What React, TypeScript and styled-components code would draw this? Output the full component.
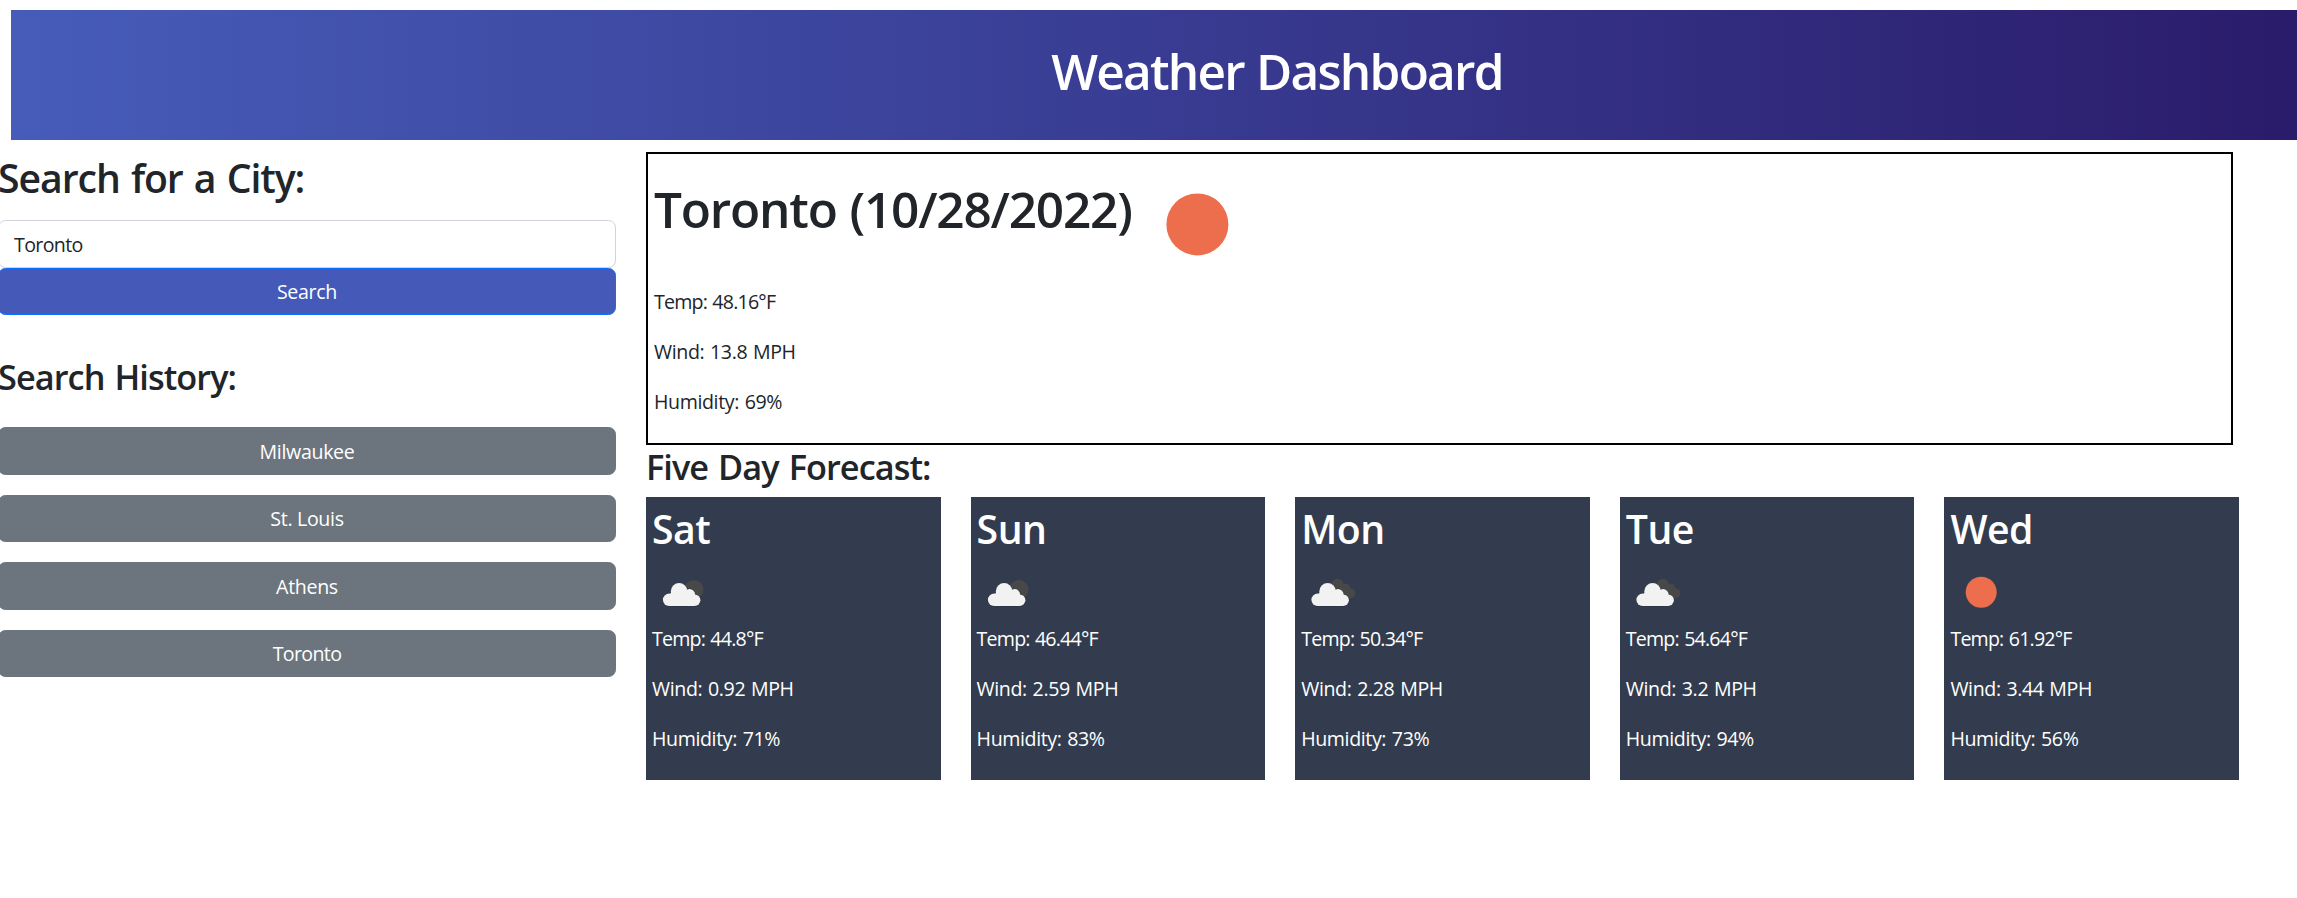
import React from 'react';
import styled, { createGlobalStyle } from 'styled-components';

const GlobalStyle = createGlobalStyle`
  *, *::before, *::after { box-sizing: border-box; }
  html { overflow: hidden; }
  body {
    margin: 0;
    background: #fff;
    color: #212529;
    font-family: 'Open Sans', 'Noto Sans', sans-serif;
    font-size: 19.6px;
    line-height: 30px;
  }
  h1, h2, h3, p { margin: 0; }
`;

const Page = styled.div`
  width: 100%;
  height: 898px;
  overflow: hidden;
`;

const Header = styled.header`
  width: 2532px;
  height: 130px;
  margin: 10px 0 0 11px;
  padding-top: 31px;
  background: linear-gradient(to right, #465cb9 0%, #2b1c6b 90%);
  color: #fff;
  text-align: center;
`;

const Title = styled.h1<{ $tracking: number }>`
  font-size: 49.5px;
  line-height: 60px;
  font-weight: 600;
  letter-spacing: ${(p) => p.$tracking}px;
  word-spacing: 1px;
  white-space: nowrap;
`;

const Columns = styled.div`
  display: flex;
  gap: 30px;
  padding-top: 12px;
`;

const Sidebar = styled.aside`
  width: 618px;
  margin-left: -2px;
  flex: none;
`;

const LargeHeading = styled.h2<{ $tracking: number }>`
  height: 48px;
  font-size: 39.2px;
  line-height: 51px;
  font-weight: 600;
  letter-spacing: ${(p) => p.$tracking}px;
  word-spacing: 2px;
`;

const MediumHeading = styled.h3<{ $below: number }>`
  height: 42px;
  font-size: 34.3px;
  line-height: 43px;
  font-weight: 600;
  letter-spacing: -0.94px;
  word-spacing: 2px;
  margin-bottom: ${(p) => p.$below}px;
`;

const SearchForm = styled.div`
  display: flex;
  flex-direction: column;
  margin: 20px 0 40px;
`;

const CityInput = styled.input`
  width: 100%;
  height: 47.5px;
  padding: 2px 15px 0;
  border: 1px solid #ced4da;
  border-radius: 7.5px;
  background: #fff;
  color: #212529;
  font: inherit;
  letter-spacing: -0.65px;
  outline: none;
`;

const Button = styled.button<{ $primary?: boolean; $tracking?: number }>`
  width: 100%;
  height: 47.5px;
  padding: 2px 0 0;
  border: 1px solid ${(p) => (p.$primary ? '#0d6efd' : '#6c757d')};
  border-radius: 7.5px;
  background: ${(p) => (p.$primary ? '#455ab8' : '#6c757d')};
  color: #fff;
  font: inherit;
  letter-spacing: ${(p) => p.$tracking ?? -0.33}px;
`;

const History = styled.div`
  display: flex;
  flex-direction: column;
  gap: 20px;
`;

const Main = styled.main`
  width: 1593px;
  flex: none;
`;

const Current = styled.section`
  width: 1587px;
  height: 293px;
  padding: 0 6px;
  border: 2px solid #000;
`;

const CurrentTop = styled.div`
  display: flex;
  height: 132px;
  padding-top: 8px;
  gap: 4px;
`;

const CityTitle = styled(Title)`
  width: 477px;
  padding-top: 17px;
`;

const Reading = styled.p<{ $tracking: number }>`
  height: 30px;
  line-height: 32px;
  margin-bottom: 20px;
  letter-spacing: ${(p) => p.$tracking}px;
  word-spacing: 1px;
  white-space: nowrap;
`;

const Cards = styled.div`
  display: grid;
  grid-template-columns: repeat(5, 1fr);
  gap: 30px;
`;

const Card = styled.article`
  height: 283px;
  padding: 6px;
  background: #323c4e;
  color: #fff;
`;

const IconRow = styled.div`
  display: flex;
  height: 72px;
  padding-top: 9.5px;
`;

const Svg = styled.svg`
  display: block;
  flex: none;
`;

type Sky = 'clear' | 'few' | 'broken';

const CloudShape = () => (
  <>
    <circle cx="16.6" cy="38.8" r="6.2" />
    <circle cx="26.6" cy="30.4" r="8.3" />
    <circle cx="37" cy="33.6" r="5.6" />
    <circle cx="42.1" cy="39.2" r="5.8" />
    <path d="M16.6 45 V34 L20 30 H38 L42.1 36 V45 Z" />
  </>
);

const WhiteCloud = () => (
  <>
    <g fill="#2b3038" stroke="#2b3038" strokeWidth="1" opacity="0.5">
      <CloudShape />
    </g>
    <g fill="#f2f2f2">
      <CloudShape />
    </g>
  </>
);

const WeatherIcon = ({ sky, size = 62.5 }: { sky: Sky; size?: number }) => (
  <Svg width={size} height={size} viewBox="0 0 62.5 62.5">
    {sky === 'clear' && <circle cx="31.2" cy="31.2" r="15.5" fill="#ec6e4c" />}
    {sky === 'few' && (
      <g transform="translate(0.5 0)">
        <circle cx="41.4" cy="28.6" r="9.6" fill="#484848" />
        <WhiteCloud />
      </g>
    )}
    {sky === 'broken' && (
      <>
        <g fill="#484848">
          <circle cx="36.6" cy="23.6" r="5.9" />
          <circle cx="44.8" cy="27.4" r="4.6" />
          <circle cx="49.6" cy="32.4" r="4.8" />
          <path d="M31 26 L42 22 L50 37 H42 Z" />
        </g>
        <WhiteCloud />
      </>
    )}
  </Svg>
);

interface Weather {
  temp: string;
  wind: string;
  humidity: string;
}

const Readings = ({ temp, wind, humidity }: Weather) => (
  <>
    <Reading $tracking={-0.8}>Temp: {temp}°F</Reading>
    <Reading $tracking={-0.38}>Wind: {wind} MPH</Reading>
    <Reading $tracking={-0.39}>Humidity: {humidity}%</Reading>
  </>
);

const forecast: (Weather & { day: string; sky: Sky })[] = [
  { day: 'Sat', sky: 'few', temp: '44.8', wind: '0.92', humidity: '71' },
  { day: 'Sun', sky: 'few', temp: '46.44', wind: '2.59', humidity: '83' },
  { day: 'Mon', sky: 'broken', temp: '50.34', wind: '2.28', humidity: '73' },
  { day: 'Tue', sky: 'broken', temp: '54.64', wind: '3.2', humidity: '94' },
  { day: 'Wed', sky: 'clear', temp: '61.92', wind: '3.44', humidity: '56' },
];

const cities = ['Milwaukee', 'St. Louis', 'Athens', 'Toronto'];

export default function App() {
  return (
    <Page>
      <GlobalStyle />
      <Header>
        <Title $tracking={-1.75}>Weather Dashboard</Title>
      </Header>
      <Columns>
        <Sidebar>
          <LargeHeading $tracking={-1.06}>Search for a City:</LargeHeading>
          <SearchForm>
            <CityInput defaultValue="Toronto" />
            <Button $primary>Search</Button>
          </SearchForm>
          <MediumHeading $below={30}>Search History:</MediumHeading>
          <History>
            {cities.map((city) => (
              <Button key={city} $tracking={city === 'Toronto' ? -0.65 : -0.33}>
                {city}
              </Button>
            ))}
          </History>
        </Sidebar>
        <Main>
          <Current>
            <CurrentTop>
              <CityTitle $tracking={-1.18}>Toronto (10/28/2022)</CityTitle>
              <WeatherIcon sky="clear" size={125} />
            </CurrentTop>
            <Readings temp="48.16" wind="13.8" humidity="69" />
          </Current>
          <MediumHeading $below={10}>Five Day Forecast:</MediumHeading>
          <Cards>
            {forecast.map(({ day, sky, ...weather }) => (
              <Card key={day}>
                <LargeHeading $tracking={-0.5}>{day}</LargeHeading>
                <IconRow>
                  <WeatherIcon sky={sky} />
                </IconRow>
                <Readings {...weather} />
              </Card>
            ))}
          </Cards>
        </Main>
      </Columns>
    </Page>
  );
}
